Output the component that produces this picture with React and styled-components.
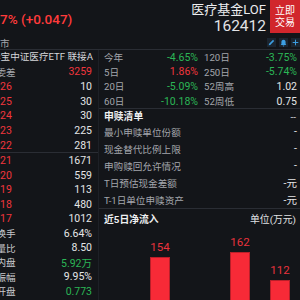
import React from 'react'
import styled, { createGlobalStyle } from 'styled-components'

const Global = createGlobalStyle`
body {
  margin: 0;
  background: #131519;
}
`

const RED = '#f0363d'
const GREEN = '#2bb556'
const WHITE = '#e4e5e7'
const GRAY = '#a3a6ac'
const LINE = '#2a2d34'

const Page = styled.div`
width: 300px;
height: 300px;
overflow: hidden;
background: #131519;
color: ${WHITE};
font-family: Roboto, "Noto Sans CJK SC", sans-serif;
`

const Header = styled.div`
display: flex;
justify-content: space-between;
height: 36px;
`

const Change = styled.div`
color: #ff3b3b;
font-size: 13.5px;
font-weight: 500;
line-height: 16px;
margin-top: 11px;
white-space: nowrap;
`

const HeadRight = styled.div`
display: flex;
align-items: flex-start;
`

const TitleBlock = styled.div`
display: flex;
flex-direction: column;
align-items: flex-end;
margin: 2px 4px 0 0;
`

const Name = styled.div`
font-size: 13px;
line-height: 16px;
color: #ecedef;
`

const Code = styled.div`
font-size: 15.5px;
line-height: 17px;
color: #e2e3e6;
`

const TradeBtn = styled.div`
width: 30px;
height: 33px;
background: #d1262c;
color: #fff;
font-size: 10px;
line-height: 12px;
display: flex;
flex-direction: column;
justify-content: center;
align-items: center;
`

const SubBar = styled.div`
display: flex;
justify-content: space-between;
align-items: center;
height: 13px;
border-bottom: 1px solid ${LINE};
`

const Small = styled.span`
font-size: 9.5px;
color: ${GRAY};
`

const Tools = styled.div`
display: flex;
gap: 3px;
`

const Tool = styled.div`
width: 9px;
height: 9px;
background: #1b2530;
display: flex;
align-items: center;
justify-content: center;
`

const Main = styled.div`
display: flex;
`

const LeftCol = styled.div`
width: 98px;
overflow: hidden;
border-right: 1px solid #1d2026;
`

const NameRow = styled.div`
height: 14px;
line-height: 14px;
font-size: 9.5px;
white-space: nowrap;
color: #d6d7da;
`

const Row = styled.div`
display: flex;
justify-content: space-between;
align-items: center;
height: ${p => p.$h}px;
padding-right: 6px;
white-space: nowrap;
`

const Cut = styled.span`
margin-left: ${p => p.$shift}px;
color: ${p => p.$color};
font-size: ${p => (p.$num ? '10.5px' : '9.6px')};
`

const Val = styled.span`
color: ${p => p.$color || WHITE};
font-size: 10.5px;
`

const Group = styled.div`
border-top: ${p => (p.$line ? `1px solid ${LINE}` : 'none')};
`

const RightCol = styled.div`
flex: 1;
`

const StatGrid = styled.div`
display: grid;
grid-template-columns: 101px 1fr;
border-bottom: 1px solid ${LINE};
`

const StatCell = styled.div`
display: flex;
justify-content: space-between;
align-items: center;
height: 14.6px;
padding: ${p => (p.$second ? '0 3px 0 4px' : '0 2px 0 5px')};
white-space: nowrap;
`

const Label = styled.span`
color: ${GRAY};
font-size: 9.6px;
`

const SectionHead = styled.div`
display: flex;
justify-content: space-between;
align-items: center;
height: ${p => p.$h}px;
padding: 0 4px 0 5px;
font-size: 9.8px;
font-weight: bold;
color: #eeeff1;
border-top: ${p => (p.$line ? `1px solid ${LINE}` : 'none')};
`

const Unit = styled.span`
font-weight: normal;
color: #e0e1e4;
`

const ItemRow = styled.div`
display: flex;
justify-content: space-between;
align-items: center;
height: 17px;
padding: 0 3px 0 5px;
`

const Chart = styled.div`
display: flex;
height: 113px;
padding-left: 1px;
`

const Slot = styled.div`
width: 40px;
display: flex;
flex-direction: column;
justify-content: flex-end;
align-items: center;
`

const BarLabel = styled.div`
font-size: 11.5px;
line-height: 12px;
color: #e8333d;
margin-bottom: 4px;
`

const Bar = styled.div`
width: 20px;
box-sizing: border-box;
background: #f72a37;
border: 1px solid #b91f29;
border-bottom: none;
`

const sells = [
  ['0.726', '10'],
  ['0.725', '30'],
  ['0.724', '30'],
  ['0.723', '225'],
  ['0.722', '281'],
]

const buys = [
  ['0.721', '1671'],
  ['0.720', '559'],
  ['0.719', '113'],
  ['0.718', '480'],
  ['0.717', '1012'],
]

const stats = [
  ['换手', '6.64%'],
  ['量比', '8.50'],
  ['内盘', '5.92万', GREEN],
  ['振幅', '9.95%'],
  ['开盘', '0.773', GREEN],
]

const perf = [
  ['今年', '-4.65%', GREEN, '120日', '-3.75%', GREEN],
  ['5日', '1.86%', RED, '250日', '-5.74%', GREEN],
  ['20日', '-5.09%', GREEN, '52周高', '1.02', WHITE],
  ['60日', '-10.18%', GREEN, '52周低', '0.75', WHITE],
]

const items = [
  ['最小申赎单位份额', '-'],
  ['现金替代比例上限', '-'],
  ['申购赎回允许情况', '-'],
  ['T日预估现金差额', '-元'],
  ['T-1日单位申赎资产', '-元'],
]

const flows = [-38, 154, -61, 162, 112]

const Pencil = () => (
  <svg width="7" height="7" viewBox="0 0 10 10">
    <path d="M1 9 L1.6 6.8 L7.2 1.2 L8.8 2.8 L3.2 8.4 Z" fill="#3d9fe3" />
  </svg>
)

const Bell = () => (
  <svg width="7" height="8" viewBox="0 0 10 11">
    <path d="M5 0.8 C2.8 0.8 2 2.6 2 4.4 L2 7 L1 8.4 L9 8.4 L8 7 L8 4.4 C8 2.6 7.2 0.8 5 0.8 Z M3.8 9.2 L6.2 9.2 C6.2 10 5.6 10.4 5 10.4 C4.4 10.4 3.8 10 3.8 9.2 Z" fill="#3d9fe3" />
  </svg>
)

const Plus = () => (
  <svg width="7" height="7" viewBox="0 0 10 10">
    <path d="M5 1 V9 M1 5 H9" stroke="#3d9fe3" strokeWidth="1.4" />
  </svg>
)

const App = () => {
  return (
    <Page>
      <Global />
      <Header>
        <Change>7% (+0.047)</Change>
        <HeadRight>
          <TitleBlock>
            <Name>医疗基金LOF</Name>
            <Code>162412</Code>
          </TitleBlock>
          <TradeBtn>
            <span>立即</span>
            <span>交易</span>
          </TradeBtn>
        </HeadRight>
      </Header>
      <SubBar>
        <Small>市</Small>
        <Tools>
          <Tool><Pencil /></Tool>
          <Tool><Bell /></Tool>
          <Tool><Plus /></Tool>
        </Tools>
      </SubBar>
      <Main>
        <LeftCol>
          <NameRow><Cut $shift={-9}>华宝中证医疗ETF 联接A</Cut></NameRow>
          <Row $h={15}>
            <Cut $shift={-3.5} $color={GRAY}>委差</Cut>
            <Val $color={RED}>3259</Val>
          </Row>
          <Group>
            {sells.map(([p, v]) => (
              <Row $h={14.7} key={p}>
                <Cut $num $shift={-14.6} $color={RED}>{p}</Cut>
                <Val>{v}</Val>
              </Row>
            ))}
          </Group>
          <Group $line>
            {buys.map(([p, v]) => (
              <Row $h={14.5} key={p}>
                <Cut $num $shift={-14.6} $color={RED}>{p}</Cut>
                <Val>{v}</Val>
              </Row>
            ))}
          </Group>
          <Group>
            {stats.map(([l, v, c]) => (
              <Row $h={14.5} key={l}>
                <Cut $shift={-3.5} $color="#c9cace">{l}</Cut>
                <Val $color={c}>{v}</Val>
              </Row>
            ))}
          </Group>
        </LeftCol>
        <RightCol>
          <StatGrid>
            {perf.map(([l1, v1, c1, l2, v2, c2]) => (
              <React.Fragment key={l1}>
                <StatCell>
                  <Label>{l1}</Label>
                  <Val $color={c1}>{v1}</Val>
                </StatCell>
                <StatCell $second>
                  <Label>{l2}</Label>
                  <Val $color={c2}>{v2}</Val>
                </StatCell>
              </React.Fragment>
            ))}
          </StatGrid>
          <SectionHead $h={14}>
            <span>申赎清单</span>
            <Unit>--</Unit>
          </SectionHead>
          {items.map(([l, v]) => (
            <ItemRow key={l}>
              <Label>{l}</Label>
              <Val>{v}</Val>
            </ItemRow>
          ))}
          <SectionHead $h={19} $line>
            <span>近5日净流入</span>
            <Unit>单位(万元)</Unit>
          </SectionHead>
          <Chart>
            {flows.map((v, i) => (
              <Slot key={i}>
                {v > 0 && <BarLabel>{v}</BarLabel>}
                {v > 0 && <Bar style={{ height: v * 0.55 }} />}
              </Slot>
            ))}
          </Chart>
        </RightCol>
      </Main>
    </Page>
  )
}

export default App
